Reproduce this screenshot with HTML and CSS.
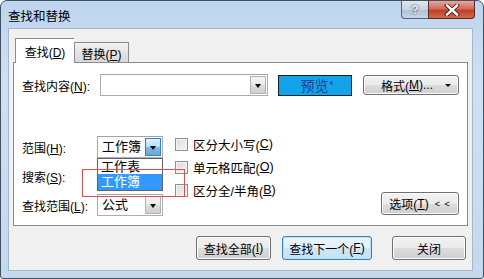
FILE: index.html
```html
<!DOCTYPE html>
<html lang="zh-CN">

<head>
    <meta charset="UTF-8">
    <title>查找和替换</title>
    <link rel="stylesheet" href="styles.css">
</head>

<body>
    <div class="window">
        <div class="titlebar">
            <span class="title">查找和替换</span>
            <div class="caption">
                <div class="cap help">?</div>
                <div class="cap close">
                    <svg width="16" height="12" viewBox="0 0 16 12">
                        <path d="M3 1.5 L13 10.5 M13 1.5 L3 10.5"
                            stroke="#4a1c16" stroke-width="4.2" fill="none" stroke-linecap="square" />
                        <path d="M3 1.5 L13 10.5 M13 1.5 L3 10.5" stroke="#ffffff" stroke-width="2.4" fill="none"
                            stroke-linecap="square" />
                    </svg>
                </div>
            </div>
        </div>

        <div class="client">
            <div class="tabs">
                <div class="tab active">查找(<u>D</u>)</div>
                <div class="tab">替换(<u>P</u>)</div>
            </div>

            <div class="panel">
                <div class="find-row">
                    <span class="lbl find-lbl">查找内容(<u>N</u>):</span>
                    <div class="combo find-box">
                        <span class="combo-text"></span>
                        <span class="arrow"></span>
                    </div>
                    <div class="preview">预览<span class="star">*</span></div>
                    <div class="btn fmt">格式(<u>M</u>)...<span class="caret"></span></div>
                </div>

                <div class="options">
                    <div class="opt-left">
                        <div class="opt-row">
                            <span class="lbl">范围(<u>H</u>):</span>
                            <div class="combo">
                                <span class="combo-text">工作簿</span>
                                <span class="arrow open"></span>
                            </div>
                        </div>
                        <div class="opt-row">
                            <span class="lbl">搜索(<u>S</u>):</span>
                            <div class="combo">
                                <span class="combo-text"></span>
                                <span class="arrow"></span>
                            </div>
                        </div>
                        <div class="opt-row">
                            <span class="lbl">查找范围(<u>L</u>):</span>
                            <div class="combo">
                                <span class="combo-text">公式</span>
                                <span class="arrow"></span>
                            </div>
                        </div>

                        <ul class="droplist">
                            <li>工作表</li>
                            <li class="selected">工作簿</li>
                        </ul>
                        <div class="mark"></div>
                    </div>

                    <div class="checks">
                        <label class="check"><span class="box"></span>区分大小写(<u>C</u>)</label>
                        <label class="check"><span class="box"></span>单元格匹配(<u>O</u>)</label>
                        <label class="check"><span class="box"></span>区分全/半角(<u>B</u>)</label>
                    </div>

                    <div class="btn opt-btn">选项(<u>T</u>) <span class="less">&lt; &lt;</span></div>
                </div>
            </div>

            <div class="actions">
                <div class="btn act">查找全部(<u>I</u>)</div>
                <div class="btn act next">查找下一个(<u>F</u>)</div>
                <div class="btn act close-btn">关闭</div>
            </div>
        </div>
    </div>
</body>

</html>
```

FILE: styles.css
```css
body {
    margin: 0;
    padding: 0;
    font-family: 'Liberation Sans', 'Noto Sans CJK SC', sans-serif;
    font-size: 12px;
    color: #000;
    background-color: #ffffff;
}

u {
    text-decoration: underline;
    text-underline-offset: 1px;
}

.window {
    width: 484px;
    height: 279px;
    box-sizing: border-box;
    border: 1px solid #3f5163;
    border-radius: 7px 7px 3px 3px;
    background: linear-gradient(to bottom, #bed5ee 0%, #cfe0f3 30%, #c4d8ee 100%);
    padding: 0 10px 7px 7px;
    display: flex;
    flex-direction: column;
}

.titlebar {
    height: 27px;
    display: flex;
    align-items: flex-start;
    justify-content: space-between;
}

.title {
    margin-top: 5px;
    font-size: 12.5px;
    color: #000;
}

.caption {
    display: flex;
    margin-right: -2px;
}

.cap {
    height: 18px;
    box-sizing: border-box;
    border: 1px solid #54657a;
    border-top: none;
    display: flex;
    align-items: center;
    justify-content: center;
}

.help {
    width: 27px;
    border-radius: 0 0 0 4px;
    background: linear-gradient(to bottom, #dfe8f2 0%, #c6d4e3 50%, #aebfd3 51%, #c7d6e6 100%);
    color: #f4f7fa;
    font-weight: bold;
    font-size: 13px;
    text-shadow: 0 0 2px #3c4a5a, 0 0 1px #3c4a5a;
    border-right: none;
}

.close {
    width: 47px;
    border-radius: 0 0 4px 0;
    background: linear-gradient(to bottom, #e5a99e 0%, #d26a58 45%, #c0402c 55%, #d36a4a 100%);
    border-color: #5a2a24;
}

.client {
    flex: 1;
    background-color: #f0f0f0;
    border: 1px solid #a6b7c9;
    padding: 9px 4px 0 4px;
    display: flex;
    flex-direction: column;
}

.tabs {
    display: flex;
    align-items: flex-end;
    padding-left: 2px;
    height: 24px;
    position: relative;
    z-index: 1;
}

.tab {
    height: 20px;
    width: 55px;
    box-sizing: border-box;
    border: 1px solid #898c95;
    border-bottom: none;
    padding-top: 2px;
    text-align: center;
    font-size: 12px;
    white-space: nowrap;
    background: linear-gradient(to bottom, #f2f2f2 0%, #e4e4e4 50%, #d8d8d8 100%);
}

.tab.active {
    height: 25px;
    width: 59px;
    margin-bottom: -1px;
    padding-top: 4px;
    background: #ffffff;
    border-right: none;
}

.panel {
    background: #ffffff;
    border: 1px solid #898c95;
    padding: 11px 8px 9px 8px;
    height: 164px;
    box-sizing: border-box;
}

.find-row {
    display: flex;
    align-items: center;
    height: 22px;
}

.lbl {
    width: 75px;
    flex-shrink: 0;
    white-space: nowrap;
}

.find-lbl {
    width: 78px;
}

.combo {
    width: 66px;
    height: 22px;
    box-sizing: border-box;
    border: 1px solid #abadb3;
    border-top-color: #a2a4aa;
    background: #ffffff;
    display: flex;
    align-items: stretch;
    padding: 1px;
}

.combo-text {
    flex: 1;
    padding-left: 3px;
    line-height: 18px;
    font-size: 13px;
}

.find-box {
    width: 168px;
}

.arrow {
    width: 16px;
    box-sizing: border-box;
    border: 1px solid #b3b3b3;
    background: linear-gradient(to bottom, #f3f3f3 0%, #ebebeb 50%, #dddddd 51%, #cfcfcf 100%);
    display: flex;
    align-items: center;
    justify-content: center;
}

.arrow::after {
    content: "";
    border-left: 3px solid transparent;
    border-right: 3px solid transparent;
    border-top: 4px solid #000;
    margin-top: 1px;
}

.arrow.open {
    border-color: #3c7fb1;
    background: linear-gradient(to bottom, #e0f0fb 0%, #b6dcf5 50%, #7fbbe6 51%, #6aa9d9 100%);
}

.preview {
    width: 74px;
    height: 21px;
    margin-left: 10px;
    box-sizing: border-box;
    border: 1px solid #14202c;
    background: #13a3e9;
    color: #1d3d8f;
    font-size: 14px;
    display: flex;
    align-items: center;
    justify-content: center;
    padding-left: 4px;
}

.star {
    font-size: 10px;
    margin-left: 1px;
}

.btn {
    box-sizing: border-box;
    border: 1px solid #707070;
    border-radius: 3px;
    background: linear-gradient(to bottom, #f2f2f2 0%, #ebebeb 50%, #dddddd 51%, #cfcfcf 100%);
    box-shadow: inset 0 0 0 1px #fcfcfc;
    display: flex;
    align-items: center;
    justify-content: center;
    white-space: nowrap;
}

.fmt {
    width: 96px;
    height: 20px;
    margin-left: 11px;
    position: relative;
    padding-right: 8px;
}

.caret {
    position: absolute;
    right: 7px;
    top: 8px;
    border-left: 3px solid transparent;
    border-right: 3px solid transparent;
    border-top: 3px solid #000;
}

.options {
    display: flex;
    margin-top: 40px;
}

.opt-left {
    display: flex;
    flex-direction: column;
    gap: 7px;
    position: relative;
}

.opt-row {
    display: flex;
    align-items: center;
    height: 22px;
}

.droplist {
    position: absolute;
    left: 75px;
    top: 22px;
    width: 66px;
    margin: 0;
    padding: 0;
    list-style: none;
    box-sizing: border-box;
    border: 1px solid #646464;
    background: #ffffff;
    font-size: 13px;
}

.droplist li {
    height: 15px;
    line-height: 15px;
    padding-left: 3px;
}

.droplist li.selected {
    background: #3399ff;
    color: #ffffff;
    height: 16px;
}

.mark {
    position: absolute;
    left: 60px;
    top: 33px;
    width: 103px;
    height: 28px;
    box-sizing: border-box;
    border: 1px solid #d9504c;
}

.checks {
    display: flex;
    flex-direction: column;
    gap: 7px;
    margin-left: 12px;
}

.check {
    display: flex;
    align-items: center;
    height: 16px;
    white-space: nowrap;
    font-size: 12.5px;
}

.box {
    width: 13px;
    height: 13px;
    box-sizing: border-box;
    border: 1px solid #8f8f8f;
    background: linear-gradient(135deg, #dcdcdc 0%, #f4f4f4 100%);
    box-shadow: inset 0 0 0 1px #f4f4f4;
    margin-right: 5px;
}

.opt-btn {
    width: 78px;
    height: 23px;
    margin-left: auto;
    align-self: flex-end;
    margin-bottom: 1px;
}

.less {
    font-size: 9px;
    margin-left: 6px;
    letter-spacing: 1px;
}

.actions {
    display: flex;
    justify-content: flex-end;
    gap: 11px;
    margin-top: 10px;
    padding-right: 2px;
}

.act {
    height: 24px;
    width: 75px;
}

.act.next {
    width: 90px;
    border-color: #3c7fb1;
    box-shadow: inset 0 0 0 1px #b8e0f8;
    background: linear-gradient(to bottom, #ecf6fc 0%, #e0f0fa 50%, #cde8f8 51%, #c2e2f6 100%);
    margin-right: 9px;
}

.close-btn {
    width: 74px;
}
```
